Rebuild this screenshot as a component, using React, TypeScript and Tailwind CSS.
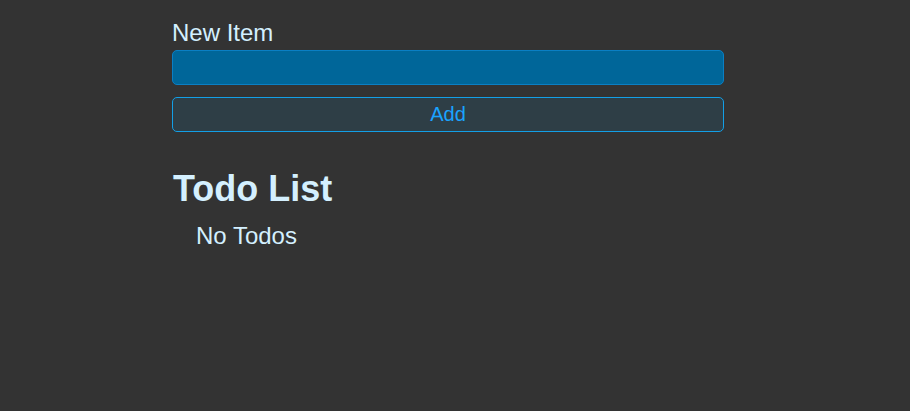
export default function App() {
  return (
    <div
      className="min-h-[411px] w-full bg-[#333333] text-[#d4f0ff]"
      style={{ fontFamily: '"Liberation Sans", Arial, sans-serif' }}
    >
      <div className="ml-[172px] w-[552px] pt-[19px]">
        <label className="block text-[24px] leading-[28px]">New Item</label>
        <input
          type="text"
          className="mt-[3px] block h-[35px] w-full rounded-[5px] border border-[#0a7fc4] bg-[#006699] px-2 text-[20px] text-white outline-none"
        />
        <button
          type="button"
          className="mt-[12px] block h-[35px] w-full rounded-[5px] border border-[#139fe6] bg-[#2e3e46] pb-[2px] text-[20px] text-[#1aa3ff]"
        >
          Add
        </button>
        <h2 className="mt-[36px] text-[36px] font-bold leading-[42px] pl-[1px]">Todo List</h2>
        <ul className="mt-[12px] pl-[24px]">
          <li className="text-[24px] leading-[28px]">No Todos</li>
        </ul>
      </div>
    </div>
  );
}
